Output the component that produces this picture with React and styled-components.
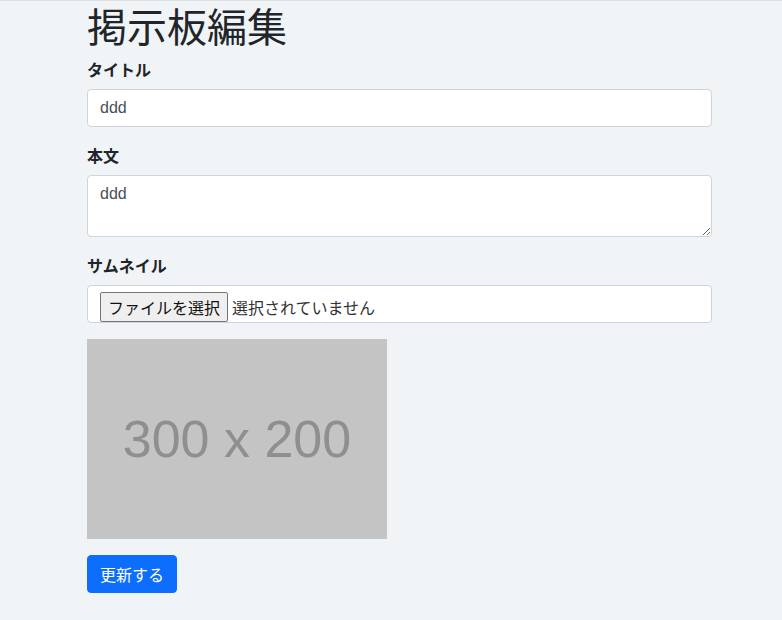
import React from 'react';
import styled, { createGlobalStyle } from 'styled-components';

const GlobalStyle = createGlobalStyle`
  html, body {
    margin: 0;
    padding: 0;
    background: #f1f4f7;
  }
  body {
    border-top: 1px solid #dcdfe3;
    font-family: "Liberation Sans", "Noto Sans CJK JP", sans-serif;
    color: #212529;
    height: 619px;
    overflow: hidden;
  }
`;

const Container = styled.div`
  width: 625px;
  margin-left: 87px;
`;

const Title = styled.h1`
  margin: 0 0 8px;
  font-size: 40px;
  font-weight: 400;
  line-height: 48px;
  font-family: "Noto Sans CJK JP", sans-serif;
`;

const Group = styled.div`
  margin-bottom: 16px;
`;

const Label = styled.label`
  display: block;
  margin-bottom: 8px;
  font-size: 16px;
  line-height: 24px;
  font-weight: 700;
  font-family: "Noto Sans CJK JP", sans-serif;
`;

const Input = styled.input`
  display: block;
  box-sizing: border-box;
  width: 100%;
  height: 38px;
  padding: 6px 12px;
  font-size: 16px;
  line-height: 24px;
  font-family: "Liberation Sans", "Noto Sans CJK JP", sans-serif;
  color: #495057;
  background: #fff;
  border: 1px solid #ced4da;
  border-radius: 4px;
  outline: none;
`;

const TextArea = styled.textarea`
  display: block;
  box-sizing: border-box;
  width: 100%;
  height: 62px;
  padding: 6px 12px;
  font-size: 16px;
  line-height: 24px;
  font-family: "Liberation Sans", "Noto Sans CJK JP", sans-serif;
  color: #495057;
  background: #fff;
  border: 1px solid #ced4da;
  border-radius: 4px;
  outline: none;
`;

const FileBox = styled.div`
  box-sizing: border-box;
  display: flex;
  align-items: flex-end;
  height: 38px;
  padding: 0 12px;
  background: #fff;
  border: 1px solid #ced4da;
  border-radius: 4px;
  overflow: hidden;
  font-family: "Noto Sans CJK JP", sans-serif;
  font-size: 16px;
`;

const FileButton = styled.span`
  box-sizing: border-box;
  display: inline-flex;
  align-items: center;
  height: 30px;
  padding: 0 7px;
  background: #efefef;
  border: 1px solid #767676;
  border-radius: 2px;
  color: #111;
  white-space: nowrap;
`;

const FileStatus = styled.span`
  margin-left: 4px;
  line-height: 30px;
  color: #333;
`;

const Placeholder = styled.div`
  display: flex;
  align-items: center;
  justify-content: center;
  width: 300px;
  height: 200px;
  margin-bottom: 16px;
  background: #c4c4c4;
  color: #8f8f8f;
  font-family: "Liberation Sans", sans-serif;
  font-size: 52px;
`;

const Button = styled.button`
  box-sizing: border-box;
  height: 38px;
  padding: 6px 12px;
  border: 1px solid #0d6efd;
  border-radius: 4px;
  background: #0d6efd;
  color: #fff;
  font-size: 16px;
  line-height: 24px;
  font-family: "Noto Sans CJK JP", sans-serif;
  cursor: pointer;
`;

export default function App() {
  return (
    <>
      <GlobalStyle />
      <Container>
        <Title>掲示板編集</Title>
        <Group>
          <Label>タイトル</Label>
          <Input defaultValue="ddd" />
        </Group>
        <Group>
          <Label>本文</Label>
          <TextArea defaultValue="ddd" />
        </Group>
        <Group>
          <Label>サムネイル</Label>
          <FileBox>
            <FileButton>ファイルを選択</FileButton>
            <FileStatus>選択されていません</FileStatus>
          </FileBox>
        </Group>
        <Placeholder>300 x 200</Placeholder>
        <Button>更新する</Button>
      </Container>
    </>
  );
}
